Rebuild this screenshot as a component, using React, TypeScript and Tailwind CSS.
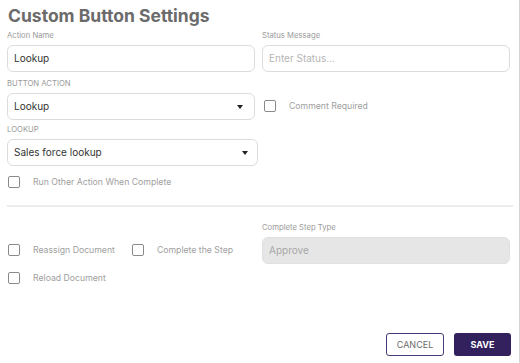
import React from "react";

function Caret() {
  return (
    <svg width="6" height="4" viewBox="0 0 6 4" className="shrink-0">
      <path d="M0 0 L6 0 L3 4 Z" fill="#222" />
    </svg>
  );
}

function Check({ label }: { label: string }) {
  return (
    <label className="flex items-center gap-[13px]">
      <span className="w-[12px] h-[12px] rounded-[2px] border-[1.5px] border-[#8a8a8a] bg-white shrink-0" />
      <span className="text-[8.7px] text-[#a0a0a0] leading-none">{label}</span>
    </label>
  );
}

function Label({ children }: { children: React.ReactNode }) {
  return <div className="text-[7.7px] text-[#9a9a9a] leading-[8px] h-[8px] mb-[5px]">{children}</div>;
}

export default function App() {
  return (
    <div
      className="w-[520px] h-[363px] bg-white border-r border-[#d4d4d4] overflow-hidden"
      style={{ fontFamily: "Inter, 'Liberation Sans', sans-serif" }}
    >
      <div className="pl-[7px] pt-[5px]">
        <h1 className="text-[17.5px] font-bold text-[#6b6b6b] leading-[22px] h-[22px] pl-[1px]">Custom Button Settings</h1>

        <div className="flex gap-[7px] mt-[5px]">
          <div className="w-[248px]">
            <Label>Action Name</Label>
            <div className="h-[27px] rounded-[6px] border border-[#dcdcdc] flex items-center px-[6px] text-[10px] text-[#333]">
              Lookup
            </div>
          </div>
          <div className="w-[248px]">
            <Label>Status Message</Label>
            <div className="h-[27px] rounded-[6px] border border-[#dcdcdc] flex items-center px-[6px] text-[10px] text-[#b5b5b5]">
              Enter Status...
            </div>
          </div>
        </div>

        <div className="flex gap-[7px] mt-[8px]">
          <div className="w-[248px]">
            <Label>BUTTON ACTION</Label>
            <div className="h-[27px] rounded-[6px] border border-[#dcdcdc] flex items-center justify-between pl-[6px] pr-[11px] text-[10px] text-[#333]">
              Lookup
              <Caret />
            </div>
          </div>
          <div className="w-[248px] flex items-end pb-[8px] pl-[2px]">
            <Check label="Comment Required" />
          </div>
        </div>

        <div className="mt-[6px] w-[251px]">
          <Label>LOOKUP</Label>
          <div className="h-[27px] rounded-[6px] border border-[#dcdcdc] flex items-center justify-between pl-[6px] pr-[9px] text-[10px] text-[#333]">
            Sales force lookup
            <Caret />
          </div>
        </div>

        <div className="mt-[10px] pl-[1px]">
          <Check label="Run Other Action When Complete" />
        </div>

        <div className="mt-[17px] h-[2px] bg-[#ececec] w-[506px]" />

        <div className="flex gap-[7px] mt-[17px]">
          <div className="w-[248px] flex flex-col pt-[20px] pl-[1px] gap-[16px]">
            <div className="flex items-center gap-[17px]">
              <Check label="Reassign Document" />
              <Check label="Complete the Step" />
            </div>
            <Check label="Reload Document" />
          </div>
          <div className="w-[248px]">
            <Label>Complete Step Type</Label>
            <div className="h-[27px] rounded-[6px] border border-[#e0e0e0] bg-[#e6e6e6] flex items-center px-[6px] text-[10px] text-[#a8a8a8]">
              Approve
            </div>
          </div>
        </div>

        <div className="flex justify-end gap-[10px] mt-[49px] w-[504px]">
          <button className="w-[58px] h-[23px] rounded-[3px] border border-[#4a3a78] text-[9px] text-[#6b6b6b] bg-white">
            CANCEL
          </button>
          <button className="w-[57px] h-[23px] rounded-[3px] bg-[#33215e] text-[9px] font-bold text-white">
            SAVE
          </button>
        </div>
      </div>
    </div>
  );
}
